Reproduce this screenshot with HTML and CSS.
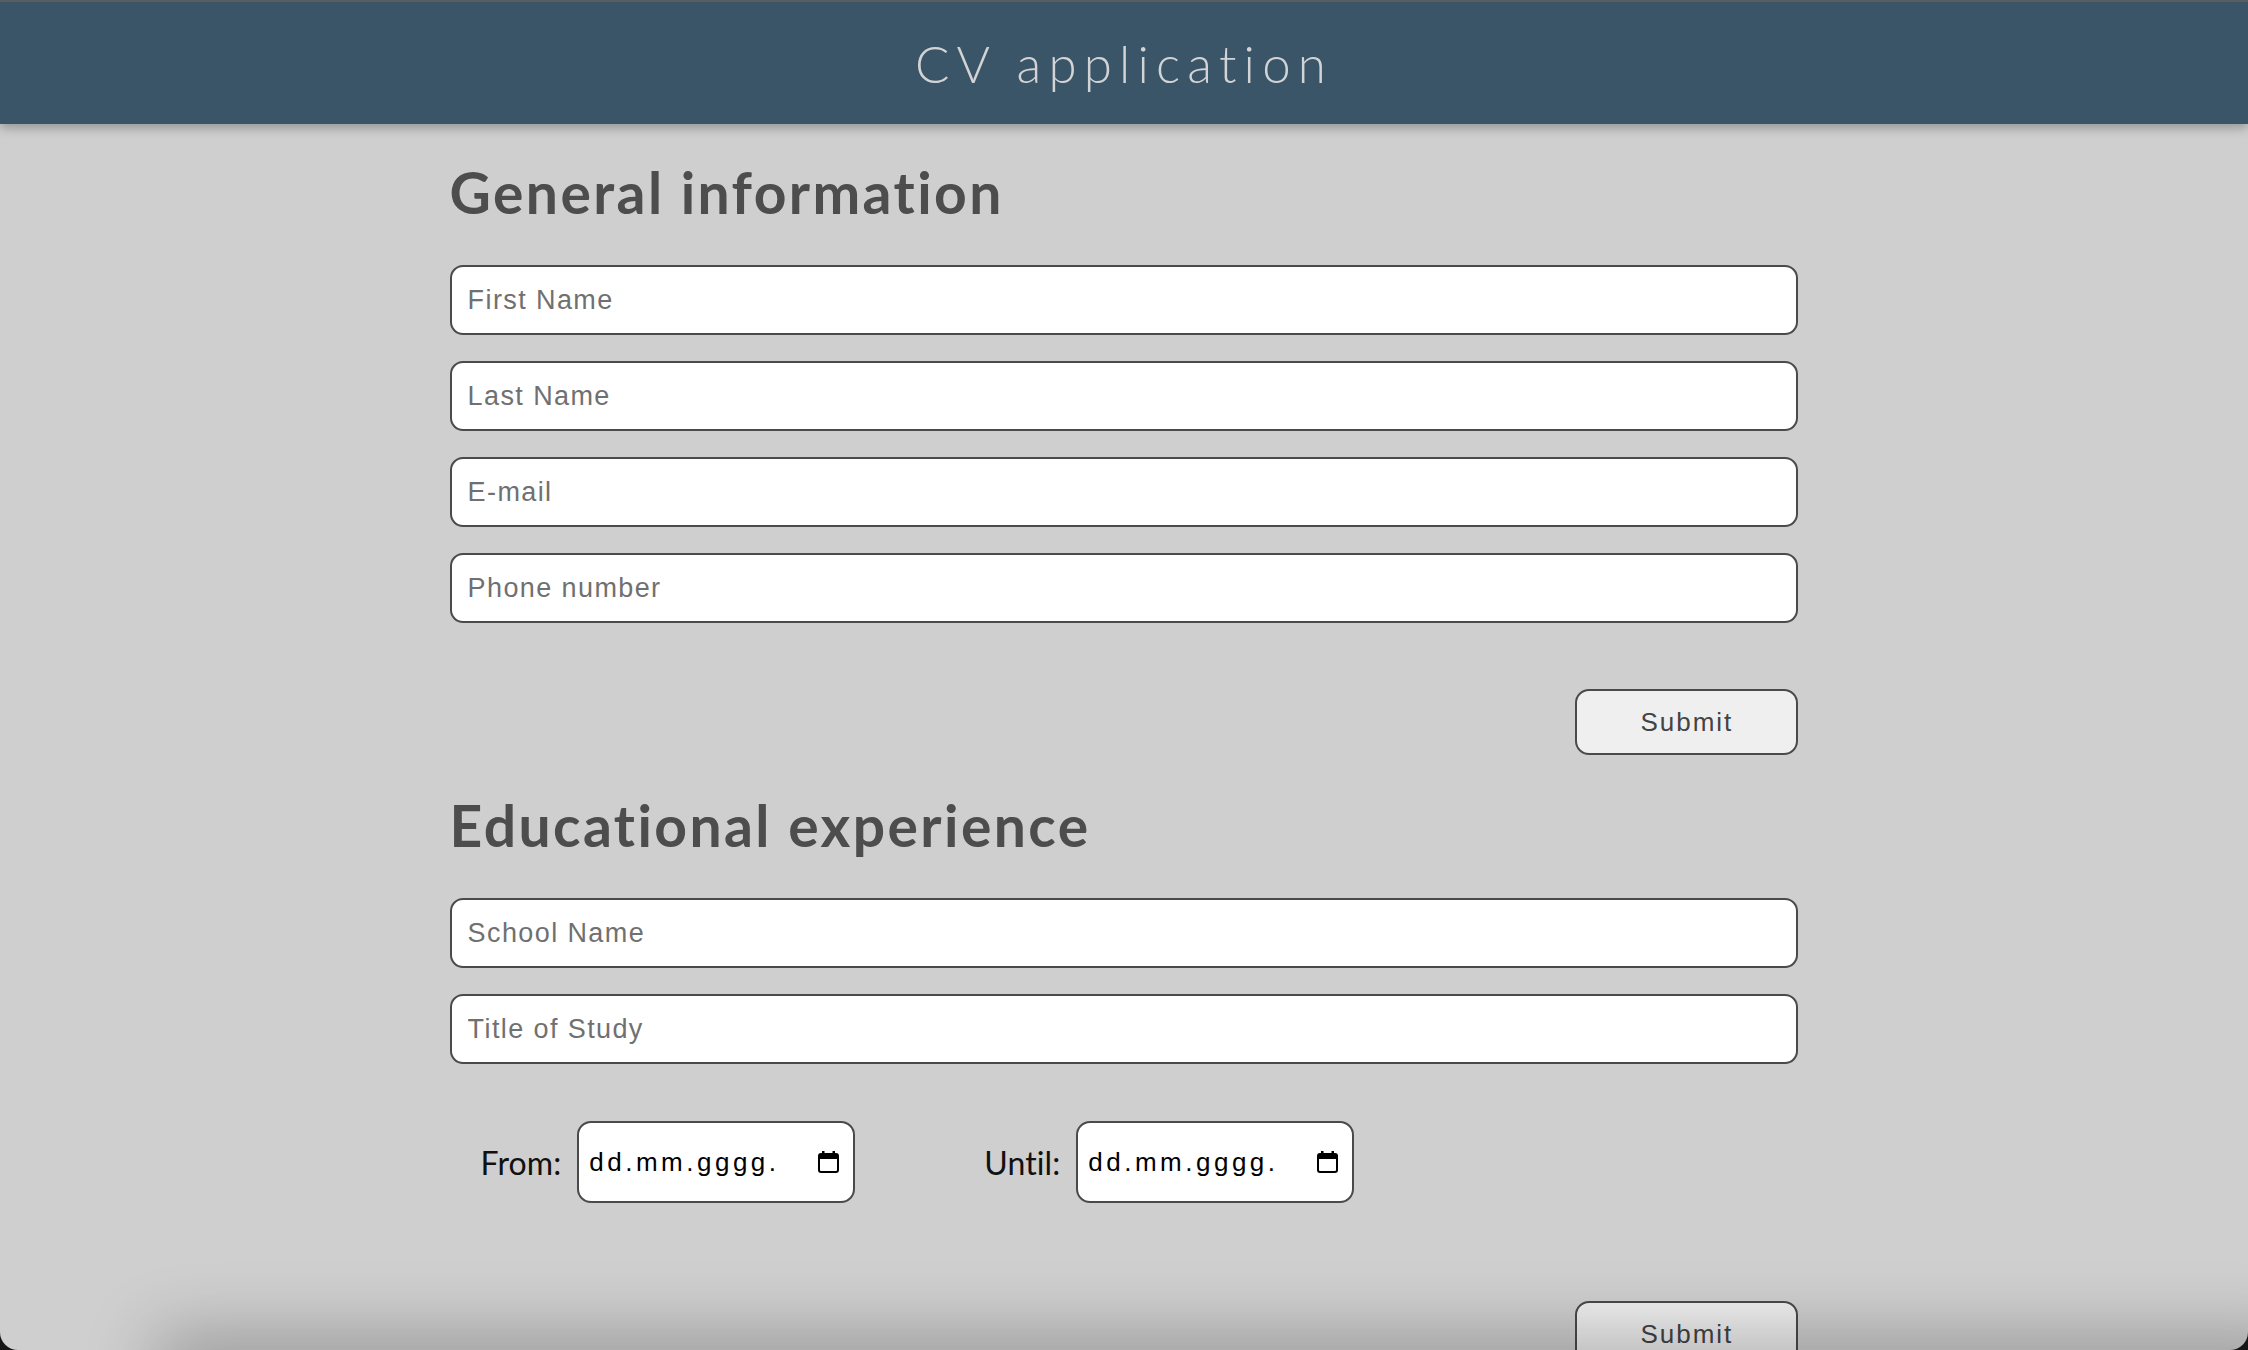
FILE: index.html
```html
<!DOCTYPE html>
<html lang="en">
<head>
<meta charset="utf-8">
<title>CV application</title>
<link rel="stylesheet" href="styles.css">
</head>
<body>
<header class="app-header">
  <h1 class="app-title">CV application</h1>
</header>
<main class="main">
  <section class="section">
    <h2 class="section-title">General information</h2>
    <form class="form">
      <div class="fields">
        <input class="field" type="text" placeholder="First Name">
        <input class="field" type="text" placeholder="Last Name">
        <input class="field" type="email" placeholder="E-mail">
        <input class="field" type="tel" placeholder="Phone number">
      </div>
      <div class="actions">
        <button class="btn" type="button">Submit</button>
      </div>
    </form>
  </section>
  <section class="section">
    <h2 class="section-title">Educational experience</h2>
    <form class="form">
      <div class="fields">
        <input class="field" type="text" placeholder="School Name">
        <input class="field" type="text" placeholder="Title of Study">
      </div>
      <div class="dates">
        <label class="date-group">
          <span class="date-label">From:</span>
          <span class="date-input">
            <span class="date-text">dd.mm.gggg.</span>
            <svg class="cal" width="21" height="22" viewBox="0 0 21 22"><rect x="4" y="0" width="2.5" height="4" fill="#000"/><rect x="14.5" y="0" width="2.5" height="4" fill="#000"/><rect x="1" y="3" width="19" height="18" rx="2" fill="none" stroke="#000" stroke-width="2"/><rect x="1" y="3" width="19" height="5" rx="1.5" fill="#000"/></svg>
          </span>
        </label>
        <label class="date-group">
          <span class="date-label">Until:</span>
          <span class="date-input">
            <span class="date-text">dd.mm.gggg.</span>
            <svg class="cal" width="21" height="22" viewBox="0 0 21 22"><rect x="4" y="0" width="2.5" height="4" fill="#000"/><rect x="14.5" y="0" width="2.5" height="4" fill="#000"/><rect x="1" y="3" width="19" height="18" rx="2" fill="none" stroke="#000" stroke-width="2"/><rect x="1" y="3" width="19" height="5" rx="1.5" fill="#000"/></svg>
          </span>
        </label>
      </div>
      <div class="actions actions-last">
        <button class="btn" type="button">Submit</button>
      </div>
    </form>
  </section>
</main>
<div class="bottom-shadow"></div>
<div class="window-frame"></div>
</body>
</html>
```

FILE: styles.css
```css
html, body {
  margin: 0;
  padding: 0;
}

body {
  background: #cfcfcf;
  font-family: "Liberation Sans", Arial, sans-serif;
  overflow: hidden;
  height: 1350px;
}

.app-header {
  height: 122px;
  border-top: 2px solid #5b5d60;
  background: #3b5568;
  display: flex;
  align-items: center;
  justify-content: center;
  box-shadow: 0 4px 10px rgba(0, 0, 0, 0.28);
  position: relative;
  z-index: 1;
}

.app-title {
  margin: 0;
  font-family: "Lato", sans-serif;
  font-weight: 300;
  font-size: 51px;
  letter-spacing: 7.2px;
  color: #d2d3d4;
  line-height: 1;
}

.main {
  width: 60%;
  margin: 0 auto;
  padding-top: 34px;
}

.section-title {
  margin: 0 0 39px;
  font-family: "Lato", sans-serif;
  font-weight: 700;
  font-size: 57px;
  line-height: 68px;
  color: #4d4d4d;
  letter-spacing: 2.4px;
}

.form {
  margin: 0;
}

.fields {
  display: flex;
  flex-direction: column;
  gap: 26px;
}

.field {
  display: block;
  width: 100%;
  box-sizing: border-box;
  height: 70px;
  margin: 0;
  padding: 0 16px;
  border: 2px solid #4a4a4a;
  border-radius: 13px;
  background: #fff;
  font-family: "Liberation Sans", Arial, sans-serif;
  font-size: 27px;
  letter-spacing: 1.4px;
  color: #222;
  outline: none;
}

.field::placeholder {
  color: #707070;
  opacity: 1;
}

.actions {
  display: flex;
  justify-content: flex-end;
  margin-top: 66px;
  margin-bottom: 36px;
}

.actions-last {
  margin-top: 98px;
}

.btn {
  width: 223px;
  height: 66px;
  box-sizing: border-box;
  border: 2px solid #4a4a4a;
  border-radius: 14px;
  background: #efefef;
  font-family: "Liberation Sans", Arial, sans-serif;
  font-size: 26px;
  letter-spacing: 2px;
  color: #444;
  padding: 0;
  cursor: pointer;
}

.dates {
  display: flex;
  align-items: center;
  gap: 129px;
  margin-top: 57px;
  padding-left: 31px;
}

.date-group {
  display: flex;
  align-items: center;
  gap: 16px;
}

.date-label {
  font-family: "Lato", sans-serif;
  font-size: 32px;
  letter-spacing: 0.1px;
  color: #111;
}

.date-input {
  width: 278px;
  height: 82px;
  box-sizing: border-box;
  border: 2px solid #4a4a4a;
  border-radius: 14px;
  background: #fff;
  display: flex;
  align-items: center;
  justify-content: space-between;
  padding: 0 14px 0 10px;
}

.date-text {
  font-family: "Liberation Sans", Arial, sans-serif;
  font-size: 26px;
  letter-spacing: 3.5px;
  color: #000;
}

.cal {
  display: block;
}

.bottom-shadow {
  position: fixed;
  left: 170px;
  right: -40px;
  top: 1350px;
  height: 40px;
  box-shadow: 0 0 70px 14px rgba(0, 0, 0, 0.28);
  pointer-events: none;
}

.window-frame {
  position: fixed;
  left: 0;
  top: 0;
  width: 2248px;
  height: 1350px;
  border-radius: 0 0 18px 18px;
  box-shadow: 0 0 0 40px #151515;
  pointer-events: none;
}
```
